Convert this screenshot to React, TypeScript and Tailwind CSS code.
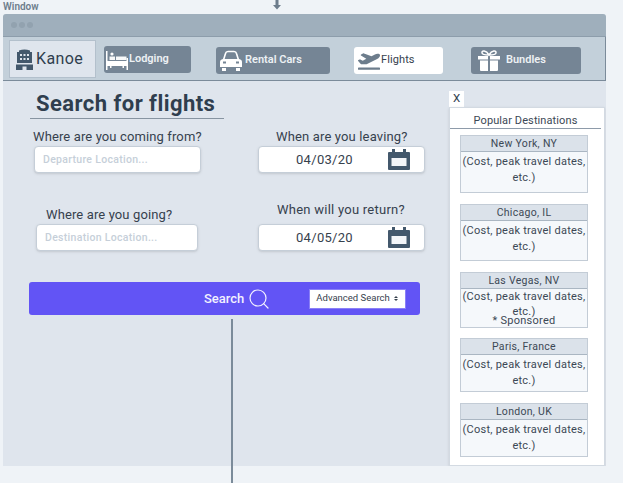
import { FaPlaneDeparture } from "react-icons/fa";
import { Search } from "lucide-react";

const destinations = [
  { name: "New York, NY", cardClass: "h-[58px]", gap: "mb-[11px]" },
  { name: "Chicago, IL", cardClass: "h-[57px]", gap: "mb-[11px]" },
  { name: "Las Vegas, NV", cardClass: "h-[56px]", gap: "mb-[10px]", sponsored: true },
  { name: "Paris, France", cardClass: "h-[54px]", gap: "mb-[11px]" },
  { name: "London, UK", cardClass: "h-[54px]", gap: "" },
];

function HotelIcon() {
  return (
    <svg width="17" height="21" viewBox="0 0 17 21" className="text-[#43586c]">
      <path
        fill="currentColor"
        fillRule="evenodd"
        d="M3 1.5 Q8.5 -0.5 14 1.5 V3 H16 V14 H1 V3 H3 Z M4 5 h2 v2 h-2 Z M7.5 5 h2 v2 h-2 Z M11 5 h2 v2 h-2 Z M4 9 h2 v2 h-2 Z M7.5 9 h2 v2 h-2 Z M11 9 h2 v2 h-2 Z"
      />
      <path fill="currentColor" d="M0 15.5 H17 V21 H10.5 V17.5 H6.5 V21 H0 Z" />
    </svg>
  );
}

function BedIcon() {
  return (
    <svg width="22" height="20" viewBox="0 0 22 20" className="mr-[1px] shrink-0 text-white">
      <path fill="currentColor" d="M0 1h1.5v19H0zM20.5 8H22v12h-1.5zM1.5 11h19v5h-19z" />
      <path fill="currentColor" d="M3.5 6.5h5.5V10H3.5zM10 6.5h10.5V10H10zM4 16h1.5v2H4zM16.5 16H18v2h-1.5z" opacity="0.95" />
      <circle cx="6" cy="4" r="1.6" fill="currentColor" />
    </svg>
  );
}

function CarIcon() {
  return (
    <svg width="22" height="21" viewBox="0 0 22 21" className="mr-[3px] shrink-0 text-white">
      <path fill="none" stroke="currentColor" strokeWidth="1.6" d="M3.5 10 L5.5 3.5 Q6 1.5 8 1.5 H14 Q16 1.5 16.5 3.5 L18.5 10" />
      <path fill="currentColor" fillRule="evenodd" d="M3 9 H19 Q22 9.5 22 12 V17 H0 V12 Q0 9.5 3 9 Z M3 11.5 h3 v2 h-3 Z M16 11.5 h3 v2 h-3 Z" />
      <path fill="currentColor" d="M2 18h4v3H2zM16 18h4v3h-4z" />
    </svg>
  );
}

function GiftIcon() {
  return (
    <svg width="22" height="21" viewBox="0 0 22 21" className="mr-[6px] shrink-0 text-white">
      <path fill="none" stroke="currentColor" strokeWidth="1.5" d="M11 5 C8 0 3.5 0 4 3 C4.3 5 8 5 11 5 C14 5 17.7 5 18 3 C18.5 0 14 0 11 5 Z" />
      <path fill="currentColor" d="M0 6h10v3.5H0zM12 6h10v3.5H12zM2 10.5h8V21H3a1 1 0 0 1-1-1zM12 10.5h8V20a1 1 0 0 1-1 1h-7z" />
    </svg>
  );
}

function CalendarIcon() {
  return (
    <svg width="22" height="21" viewBox="0 0 22 21" className="shrink-0 text-[#43586c]">
      <path fill="currentColor" d="M1 3h3V0h3v3h8V0h3v3h3a1 1 0 0 1 1 1v16a1 1 0 0 1-1 1H1a1 1 0 0 1-1-1V4a1 1 0 0 1 1-1z" />
      <rect x="3.5" y="9" width="15" height="8" fill="#f3f5f8" />
    </svg>
  );
}

function DateField({ value }: { value: string }) {
  return (
    <div className="flex h-[27px] w-[167px] items-center rounded-sm border border-[#c5ced8] bg-white pl-[37px] pr-[14px] shadow-sm">
      <span className="flex-1 text-[13px] tracking-[0.3px] text-[#36414d]">{value}</span>
      <CalendarIcon />
    </div>
  );
}

function NavItem({ icon, label, className }: { icon: React.ReactNode; label: string; className: string }) {
  return (
    <div className={`flex h-[27px] items-center rounded-[3px] bg-[#758595] text-[11px] font-semibold text-[#edf1f4] ${className}`}>
      {icon}
      <span>{label}</span>
    </div>
  );
}

function DestinationCard({ name, cardClass, gap, sponsored }: { name: string; cardClass: string; gap: string; sponsored?: boolean }) {
  return (
    <div className={`border border-[#c3ccd6] bg-[#f5f8fb] text-center text-[11px] leading-[16px] tracking-[0.25px] text-[#3c4855] ${cardClass} ${gap}`}>
      <div className="h-[16px] border-b border-[#aab6c2] bg-[#dbe2ea] text-[10.5px] leading-[15px] tracking-[0.3px]">{name}</div>
      <div className={sponsored ? "" : "pt-[2px]"}>
        {sponsored ? (
          <>
            <div className="leading-[16px]">(Cost, peak travel dates,</div>
            <div className="leading-[14px]">etc.)</div>
            <div className="-mt-[3px] leading-[9px]">* Sponsored</div>
          </>
        ) : (
          <>(Cost, peak travel dates, etc.)</>
        )}
      </div>
    </div>
  );
}

export default function App() {
  return (
    <div className="relative h-[483px] w-[623px] overflow-hidden bg-[#eff3f7] pl-[3px] pt-[14px] [font-family:Roboto,sans-serif]">
      <div className="absolute left-[3px] top-[1px] text-[10px] font-semibold leading-[12px] text-[#6d7d8c]">Window</div>
      <svg width="10" height="10" viewBox="0 0 10 10" className="absolute left-[272px] top-0 text-[#6d7d8c]">
        <path fill="currentColor" d="M3.5 0h3v5H9L5 9.5 1 5h2.5z" />
      </svg>

      <div className="flex h-[452px] w-[603px] flex-col overflow-hidden rounded-t-[3px] bg-[#dfe5ed]">
        <div className="flex h-[23px] items-center gap-[2px] border-b border-[#8d9dab] bg-[#9fafbc] pl-[8px]">
          <span className="h-[6px] w-[6px] rounded-full bg-[#92a2af]" />
          <span className="h-[6px] w-[6px] rounded-full bg-[#92a2af]" />
          <span className="h-[6px] w-[6px] rounded-full bg-[#92a2af]" />
        </div>

        <div className="flex h-[44px] items-start border-b border-r border-[#7b8b9a] bg-[#c3d0da] pl-[6px] pt-[3px]">
          <div className="flex h-[38px] w-[87px] items-center gap-[3px] border border-[#b3c0cc] bg-[#dfe5ed] pl-[6px] text-[16px] tracking-[0.4px] text-[#2f3e4e]">
            <HotelIcon />
            <span>Kanoe</span>
          </div>
          <NavItem className="ml-[8px] mt-[6px] w-[87px] pl-[2px]" icon={<BedIcon />} label="Lodging" />
          <NavItem className="ml-[25px] mt-[7px] w-[114px] pl-[4px]" icon={<CarIcon />} label="Rental Cars" />
          <div className="ml-[24px] mt-[7px] flex h-[27px] w-[89px] items-center rounded-[3px] bg-white pl-[4px] text-[11px] tracking-[0.1px] text-[#36414d]">
            <FaPlaneDeparture size={22} className="mr-[1px] text-[#6d7d8c]" />
            <span>Flights</span>
          </div>
          <NavItem className="ml-[28px] mt-[7px] w-[110px] pl-[7px]" icon={<GiftIcon />} label="Bundles" />
        </div>

        <div className="flex flex-1">
          <div className="w-[446px] pl-[26px] pt-[10px]">
            <h1 className="ml-px w-[194px] border-b border-[#8794a1] pb-px pl-[6px] text-[22px] font-bold leading-[26px] tracking-[0.45px] text-[#2f3e4e]">
              Search for flights
            </h1>

            <div className="flex pt-[9px]">
              <div className="w-[229px]">
                <div className="ml-[4px] h-[18px] text-[13px] leading-[18px] tracking-[0.12px] text-[#36414d]">Where are you coming from?</div>
                <div className="ml-[5px] flex h-[27px] w-[167px] items-center rounded-sm border border-[#c5ced8] bg-white pl-[8px] text-[10.5px] font-medium tracking-[0.3px] text-[#c6cfd9] shadow-sm">
                  Departure Location...
                </div>
              </div>
              <div>
                <div className="h-[18px] pl-[18px] text-[13px] leading-[18px] tracking-[0.15px] text-[#36414d]">When are you leaving?</div>
                <DateField value="04/03/20" />
              </div>
            </div>

            <div className="flex pt-[33px]">
              <div className="w-[229px]">
                <div className="ml-[17px] h-[18px] text-[13px] leading-[18px] tracking-[0.12px] text-[#36414d]">Where are you going?</div>
                <div className="ml-[7px] flex h-[27px] w-[162px] items-center rounded-sm border border-[#c5ced8] bg-white pl-[8px] text-[10.5px] font-medium tracking-[0.3px] text-[#c6cfd9] shadow-sm">
                  Destination Location...
                </div>
              </div>
              <div>
                <div className="-mt-[5px] h-[23px] pl-[19px] text-[13px] leading-[18px] tracking-[0.25px] text-[#36414d]">When will you return?</div>
                <DateField value="04/05/20" />
              </div>
            </div>

            <div className="mt-[31px] flex h-[33px] w-[391px] items-center rounded-[3px] bg-[#6254f5] pl-[175px]">
              <span className="text-[13px] font-medium text-[#f2f1ff]">Search</span>
              <Search size={24} strokeWidth={1.2} className="ml-[3px] text-[#f2f1ff]" />
              <div className="ml-[38px] flex h-[20px] w-[97px] items-center justify-between border border-[#8a80f7] bg-white pl-[6px] pr-[7px] text-[9.5px] text-[#36414d]">
                <span>Advanced Search</span>
                <span className="flex flex-col gap-px">
                  <span className="h-0 w-0 border-x-[2px] border-b-[2px] border-x-transparent border-b-[#36414d]" />
                  <span className="h-0 w-0 border-x-[2px] border-t-[2px] border-x-transparent border-t-[#36414d]" />
                </span>
              </div>
            </div>
          </div>

          <div className="w-[156px] pt-[10px]">
            <div className="flex h-[16px] w-[15px] items-center justify-center bg-white text-[11.5px] leading-none text-[#2f3e4e]">X</div>
            <div className="h-[359px] border border-[#d3dae2] bg-white shadow-sm">
              <div className="mr-[3px] h-[21px] border-b border-[#8e9baa] pt-[5px] text-center text-[11px] leading-[15px] tracking-[0.1px] text-[#3c4855]">
                Popular Destinations
              </div>
              <div className="pl-[10px] pr-[16px] pt-[6px]">
                {destinations.map((d) => (
                  <DestinationCard key={d.name} {...d} />
                ))}
              </div>
            </div>
          </div>
        </div>
      </div>

      <div className="absolute left-[231px] top-[319px] h-[164px] w-[2px] bg-[#7b8b9a]" />
    </div>
  );
}
